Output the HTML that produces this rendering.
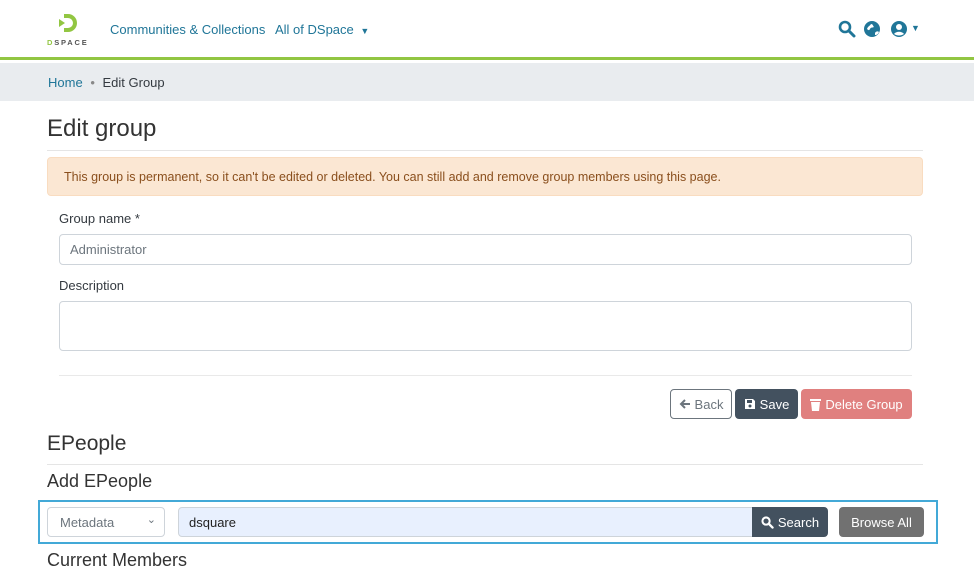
<!DOCTYPE html>
<html><head><meta charset="utf-8"><style>
*{box-sizing:border-box;margin:0;padding:0}
body{width:974px;height:554px;overflow:hidden;background:#fff;font-family:"Liberation Sans",sans-serif;font-size:13.5px;color:#343a40;position:relative}
.a{position:absolute}
.hdr{top:0;left:0;width:974px;height:60px;border-bottom:3px solid #92c642;background:#fff}
.nav{color:#207698;font-size:13px}
.bc{top:63px;left:0;width:974px;height:38px;background:#e9ecef}
.inp{border:1px solid #ced4da;border-radius:4px;background:#fff}
.btn{border-radius:4px;font-size:13px;display:flex;align-items:center;justify-content:center;gap:4px;white-space:nowrap}
</style></head><body>
<div class="a hdr"></div>
<svg class="a" style="left:58px;top:13px" width="22" height="20" viewBox="0 0 22 20"><path d="M6 1h4a9 9 0 0 1 0 18H6v-4h4a5 5 0 0 0 0-10H6z" fill="#92c642"/><path d="M1 6l6 4-6 4z" fill="#92c642"/></svg>
<div class="a" style="left:47px;top:38px;font-size:7.5px;letter-spacing:1.8px;color:#555;font-weight:bold"><span style="color:#92c642">D</span>SPACE</div>
<div class="a nav" style="left:110px;top:22px">Communities &amp; Collections</div>
<div class="a nav" style="left:275px;top:22px">All of DSpace <span style="font-size:9px;margin-left:3px">▼</span></div>
<svg class="a" style="left:838px;top:20px" width="18" height="18" viewBox="0 0 18 18"><circle cx="7" cy="7" r="5" stroke="#207698" stroke-width="2.6" fill="none"/><path d="M11 11l5 5" stroke="#207698" stroke-width="3" stroke-linecap="round"/></svg>
<svg class="a" style="left:863px;top:20px" width="18" height="18" viewBox="0 0 18 18"><circle cx="9" cy="9" r="8" fill="#207698"/><path d="M4 9c1-3 3-3 4-5 2 0 2 2 3 3-2 1-3 0-4 2s-2 1-3 0zM12 13c1-2 3-2 4-1-1 2-2 3-4 3z" fill="#fff"/></svg>
<svg class="a" style="left:890px;top:20px" width="18" height="18" viewBox="0 0 18 18"><circle cx="9" cy="9" r="8" fill="#207698"/><circle cx="9" cy="7" r="3" fill="#fff"/><path d="M4 14c2-3 8-3 10 0-3 2-7 2-10 0z" fill="#fff"/></svg>
<div class="a" style="left:911px;top:23px;font-size:9px;color:#207698">▼</div>
<div class="a bc"></div>
<div class="a" style="left:48px;top:75px;font-size:13px"><span style="color:#207698">Home</span> <span style="color:#888;margin:0 4px">•</span> Edit Group</div>
<div class="a" style="left:47px;top:115px;font-size:24px;color:#333">Edit group</div>
<div class="a" style="left:47px;top:150px;width:876px;border-top:1px solid #e5e5e5"></div>
<div class="a" style="left:47px;top:157px;width:876px;height:39px;background:#fbe7d3;border:1px solid #f9dcc0;border-radius:4px;color:#8a4f1d;font-size:12.5px;padding:12px 16px">This group is permanent, so it can't be edited or deleted. You can still add and remove group members using this page.</div>
<div class="a" style="left:59px;top:211px;font-size:13px">Group name *</div>
<div class="a inp" style="left:59px;top:234px;width:853px;height:31px;padding:7px 10px;color:#6c757d;font-size:13px">Administrator</div>
<div class="a" style="left:59px;top:278px;font-size:13px">Description</div>
<div class="a inp" style="left:59px;top:301px;width:853px;height:50px"></div>
<div class="a" style="left:59px;top:375px;width:853px;border-top:1px solid #e9e9e9"></div>
<div class="a btn" style="left:670px;top:389px;width:62px;height:30px;border:1px solid #6c757d;color:#6c757d"><svg width="12" height="12" viewBox="0 0 12 12"><path d="M11 6H2M6 2L2 6l4 4" stroke="#6c757d" stroke-width="2" fill="none"/></svg>Back</div>
<div class="a btn" style="left:735px;top:389px;width:63px;height:30px;background:#43515f;color:#fff"><svg width="12" height="12" viewBox="0 0 12 12"><path d="M1 1h8l2 2v8H1z" fill="#fff"/><rect x="3" y="2" width="5" height="3" fill="#43515f"/><circle cx="6" cy="8" r="1.5" fill="#43515f"/></svg>Save</div>
<div class="a btn" style="left:801px;top:389px;width:111px;height:30px;background:#e0807f;color:#fff"><svg width="11" height="13" viewBox="0 0 11 13"><rect x="0" y="1" width="11" height="2" fill="#fff"/><path d="M1 4h9l-1 9H2z" fill="#fff"/></svg>Delete Group</div>
<div class="a" style="left:47px;top:432px;font-size:21px;color:#333">EPeople</div>
<div class="a" style="left:47px;top:464px;width:876px;border-top:1px solid #e5e5e5"></div>
<div class="a" style="left:47px;top:471px;font-size:18px;color:#333">Add EPeople</div>
<div class="a" style="left:47px;top:550px;font-size:18px;color:#333">Current Members</div>
<div class="a" style="left:38px;top:500px;width:900px;height:44px;border:2px solid #43a9d7;background:#fff"></div>
<div class="a inp" style="left:47px;top:507px;width:118px;height:30px;padding:7px 12px;color:#6c757d;font-size:13px">Metadata<span style="position:absolute;right:8px;top:5px;font-size:11px">⌄</span></div>
<div class="a" style="left:178px;top:507px;width:575px;height:30px;background:#e8f0fe;border:1px solid #ced4da;border-radius:4px 0 0 4px;padding:7px 10px;font-size:13px;color:#222">dsquare</div>
<div class="a btn" style="left:752px;top:507px;width:76px;height:30px;background:#43515f;color:#fff;border-radius:0 4px 4px 0"><svg width="13" height="13" viewBox="0 0 18 18"><circle cx="7" cy="7" r="5" stroke="#fff" stroke-width="2.8" fill="none"/><path d="M11 11l5 5" stroke="#fff" stroke-width="3.2" stroke-linecap="round"/></svg>Search</div>
<div class="a btn" style="left:839px;top:507px;width:85px;height:30px;background:#717171;color:#fff">Browse All</div>
</body></html>
